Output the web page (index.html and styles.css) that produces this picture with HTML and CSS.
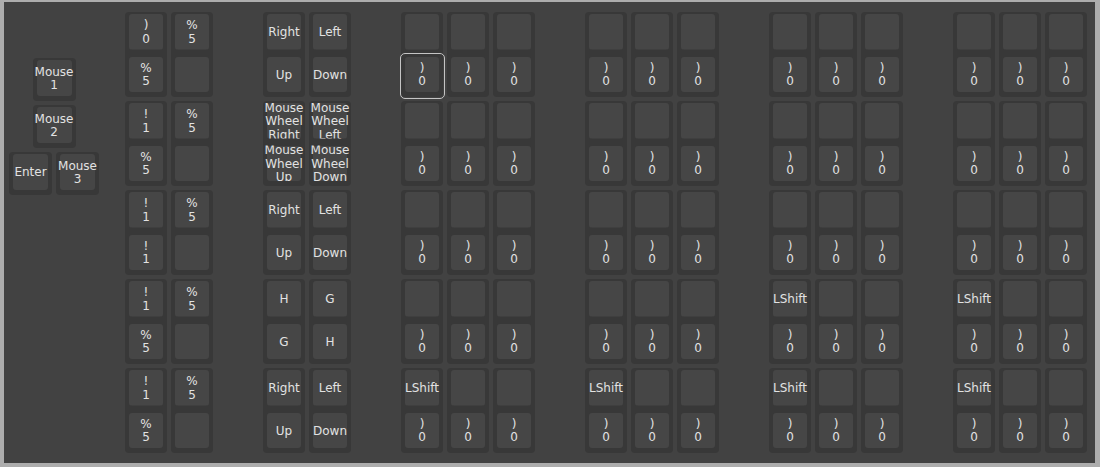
FILE: index.html
```html
<!DOCTYPE html>
<html>
<head>
<meta charset="utf-8">
<link rel="stylesheet" href="styles.css">
</head>
<body>
<div class="panel">
  <div class="mice">
    <div class="g m"><div class="k">Mouse<br>1</div></div>
    <div class="g m"><div class="k">Mouse<br>2</div></div>
    <div class="mrow">
      <div class="g m"><div class="k">Enter</div></div>
      <div class="g m"><div class="k">Mouse<br>3</div></div>
    </div>
  </div>
  <div class="sets">
    <div class="set">
      <div class="row">
        <div class="g"><div class="k">)<br>0</div><div class="k">%<br>5</div></div>
        <div class="g"><div class="k">%<br>5</div><div class="k"></div></div>
      </div>
      <div class="row">
        <div class="g"><div class="k">!<br>1</div><div class="k">%<br>5</div></div>
        <div class="g"><div class="k">%<br>5</div><div class="k"></div></div>
      </div>
      <div class="row">
        <div class="g"><div class="k">!<br>1</div><div class="k">!<br>1</div></div>
        <div class="g"><div class="k">%<br>5</div><div class="k"></div></div>
      </div>
      <div class="row">
        <div class="g"><div class="k">!<br>1</div><div class="k">%<br>5</div></div>
        <div class="g"><div class="k">%<br>5</div><div class="k"></div></div>
      </div>
      <div class="row">
        <div class="g"><div class="k">!<br>1</div><div class="k">%<br>5</div></div>
        <div class="g"><div class="k">%<br>5</div><div class="k"></div></div>
      </div>
    </div>

    <div class="set">
      <div class="row">
        <div class="g"><div class="k">Right</div><div class="k">Up</div></div>
        <div class="g"><div class="k">Left</div><div class="k">Down</div></div>
      </div>
      <div class="row">
        <div class="g"><div class="k">Mouse<br>Wheel<br>Right</div><div class="k">Mouse<br>Wheel<br>Up</div></div>
        <div class="g"><div class="k">Mouse<br>Wheel<br>Left</div><div class="k">Mouse<br>Wheel<br>Down</div></div>
      </div>
      <div class="row">
        <div class="g"><div class="k">Right</div><div class="k">Up</div></div>
        <div class="g"><div class="k">Left</div><div class="k">Down</div></div>
      </div>
      <div class="row">
        <div class="g"><div class="k">H</div><div class="k">G</div></div>
        <div class="g"><div class="k">G</div><div class="k">H</div></div>
      </div>
      <div class="row">
        <div class="g"><div class="k">Right</div><div class="k">Up</div></div>
        <div class="g"><div class="k">Left</div><div class="k">Down</div></div>
      </div>
    </div>

    <div class="set">
      <div class="row">
        <div class="g"><div class="k"></div><div class="k sel">)<br>0</div></div>
        <div class="g"><div class="k"></div><div class="k">)<br>0</div></div>
        <div class="g"><div class="k"></div><div class="k">)<br>0</div></div>
      </div>
      <div class="row">
        <div class="g"><div class="k"></div><div class="k">)<br>0</div></div>
        <div class="g"><div class="k"></div><div class="k">)<br>0</div></div>
        <div class="g"><div class="k"></div><div class="k">)<br>0</div></div>
      </div>
      <div class="row">
        <div class="g"><div class="k"></div><div class="k">)<br>0</div></div>
        <div class="g"><div class="k"></div><div class="k">)<br>0</div></div>
        <div class="g"><div class="k"></div><div class="k">)<br>0</div></div>
      </div>
      <div class="row">
        <div class="g"><div class="k"></div><div class="k">)<br>0</div></div>
        <div class="g"><div class="k"></div><div class="k">)<br>0</div></div>
        <div class="g"><div class="k"></div><div class="k">)<br>0</div></div>
      </div>
      <div class="row">
        <div class="g"><div class="k">LShift</div><div class="k">)<br>0</div></div>
        <div class="g"><div class="k"></div><div class="k">)<br>0</div></div>
        <div class="g"><div class="k"></div><div class="k">)<br>0</div></div>
      </div>
    </div>

    <div class="set">
      <div class="row">
        <div class="g"><div class="k"></div><div class="k">)<br>0</div></div>
        <div class="g"><div class="k"></div><div class="k">)<br>0</div></div>
        <div class="g"><div class="k"></div><div class="k">)<br>0</div></div>
      </div>
      <div class="row">
        <div class="g"><div class="k"></div><div class="k">)<br>0</div></div>
        <div class="g"><div class="k"></div><div class="k">)<br>0</div></div>
        <div class="g"><div class="k"></div><div class="k">)<br>0</div></div>
      </div>
      <div class="row">
        <div class="g"><div class="k"></div><div class="k">)<br>0</div></div>
        <div class="g"><div class="k"></div><div class="k">)<br>0</div></div>
        <div class="g"><div class="k"></div><div class="k">)<br>0</div></div>
      </div>
      <div class="row">
        <div class="g"><div class="k"></div><div class="k">)<br>0</div></div>
        <div class="g"><div class="k"></div><div class="k">)<br>0</div></div>
        <div class="g"><div class="k"></div><div class="k">)<br>0</div></div>
      </div>
      <div class="row">
        <div class="g"><div class="k">LShift</div><div class="k">)<br>0</div></div>
        <div class="g"><div class="k"></div><div class="k">)<br>0</div></div>
        <div class="g"><div class="k"></div><div class="k">)<br>0</div></div>
      </div>
    </div>

    <div class="set">
      <div class="row">
        <div class="g"><div class="k"></div><div class="k">)<br>0</div></div>
        <div class="g"><div class="k"></div><div class="k">)<br>0</div></div>
        <div class="g"><div class="k"></div><div class="k">)<br>0</div></div>
      </div>
      <div class="row">
        <div class="g"><div class="k"></div><div class="k">)<br>0</div></div>
        <div class="g"><div class="k"></div><div class="k">)<br>0</div></div>
        <div class="g"><div class="k"></div><div class="k">)<br>0</div></div>
      </div>
      <div class="row">
        <div class="g"><div class="k"></div><div class="k">)<br>0</div></div>
        <div class="g"><div class="k"></div><div class="k">)<br>0</div></div>
        <div class="g"><div class="k"></div><div class="k">)<br>0</div></div>
      </div>
      <div class="row">
        <div class="g"><div class="k">LShift</div><div class="k">)<br>0</div></div>
        <div class="g"><div class="k"></div><div class="k">)<br>0</div></div>
        <div class="g"><div class="k"></div><div class="k">)<br>0</div></div>
      </div>
      <div class="row">
        <div class="g"><div class="k">LShift</div><div class="k">)<br>0</div></div>
        <div class="g"><div class="k"></div><div class="k">)<br>0</div></div>
        <div class="g"><div class="k"></div><div class="k">)<br>0</div></div>
      </div>
    </div>

    <div class="set">
      <div class="row">
        <div class="g"><div class="k"></div><div class="k">)<br>0</div></div>
        <div class="g"><div class="k"></div><div class="k">)<br>0</div></div>
        <div class="g"><div class="k"></div><div class="k">)<br>0</div></div>
      </div>
      <div class="row">
        <div class="g"><div class="k"></div><div class="k">)<br>0</div></div>
        <div class="g"><div class="k"></div><div class="k">)<br>0</div></div>
        <div class="g"><div class="k"></div><div class="k">)<br>0</div></div>
      </div>
      <div class="row">
        <div class="g"><div class="k"></div><div class="k">)<br>0</div></div>
        <div class="g"><div class="k"></div><div class="k">)<br>0</div></div>
        <div class="g"><div class="k"></div><div class="k">)<br>0</div></div>
      </div>
      <div class="row">
        <div class="g"><div class="k">LShift</div><div class="k">)<br>0</div></div>
        <div class="g"><div class="k"></div><div class="k">)<br>0</div></div>
        <div class="g"><div class="k"></div><div class="k">)<br>0</div></div>
      </div>
      <div class="row">
        <div class="g"><div class="k">LShift</div><div class="k">)<br>0</div></div>
        <div class="g"><div class="k"></div><div class="k">)<br>0</div></div>
        <div class="g"><div class="k"></div><div class="k">)<br>0</div></div>
      </div>
    </div>
  </div>
</div>
</body>
</html>
```
FILE: styles.css
```css
html, body {
  margin: 0;
  padding: 0;
  background: #adadad;
  height: 467px;
  overflow: hidden;
}
body {
  font-family: "DejaVu Sans", "Liberation Sans", sans-serif;
  font-size: 12px;
  line-height: 13.5px;
  color: #e2e2e2;
}
.panel {
  box-sizing: border-box;
  margin: 2px 5px 0 4px;
  height: 461px;
  background: #424242;
  display: flex;
  align-items: flex-start;
  padding: 10px 0 0 5px;
}
.mice {
  width: 90px;
  margin-top: 46px;
  display: flex;
  flex-direction: column;
  align-items: center;
  gap: 4px;
}
.mrow {
  display: flex;
  gap: 4px;
}
.sets {
  display: flex;
  gap: 50px;
  margin-left: 26px;
}
.set {
  display: flex;
  flex-direction: column;
  gap: 4px;
}
.row {
  display: flex;
  gap: 4px;
}
.g {
  width: 42px;
  height: 85px;
  background: #383838;
  border-radius: 4px;
  display: flex;
  flex-direction: column;
}
.g.m {
  width: 43px;
  height: 43px;
}
.k {
  position: relative;
  box-sizing: border-box;
  margin: 2px 4px 5px;
  height: 35.5px;
  padding-top: 2px;
  background: #464646;
  border-radius: 3px;
  display: flex;
  align-items: center;
  justify-content: center;
  text-align: center;
  white-space: nowrap;
  clip-path: inset(0 -12px);
}
.g.m .k {
  height: 36px;
}
.k.sel {
  clip-path: none;
}
.k.sel::after {
  content: "";
  position: absolute;
  left: -5px;
  right: -6px;
  top: -3.5px;
  bottom: -6.5px;
  border: 1.5px solid #c4c4c4;
  border-radius: 5px;
}
```
